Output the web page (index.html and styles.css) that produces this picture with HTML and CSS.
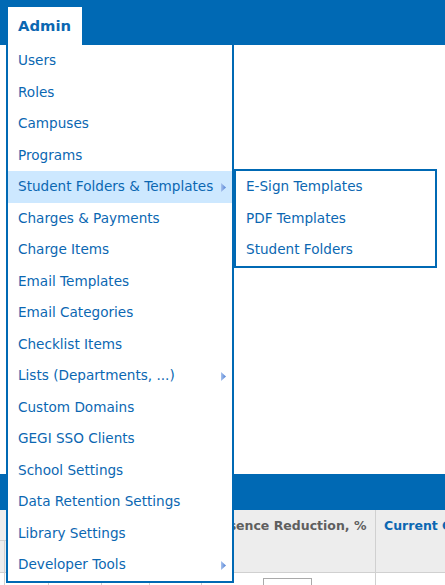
FILE: index.html
```html
<!DOCTYPE html>
<html>
<head>
<meta charset="utf-8">
<link rel="stylesheet" href="styles.css">
</head>
<body>
<div class="page">
  <div class="topbar">
    <div class="tab">Admin</div>
  </div>
  <div class="content"></div>
  <div class="band"></div>
  <table class="grid">
    <colgroup>
      <col class="w44"><col class="w44"><col class="w53"><col class="w48"><col class="w52"><col class="w174"><col class="w130">
    </colgroup>
    <tr class="hrow1">
      <th colspan="2"></th>
      <th colspan="3"></th>
      <th class="hcell" rowspan="2">Absence Reduction, %</th>
      <th class="hcell blue" rowspan="2">Current Grade</th>
    </tr>
    <tr class="hrow2">
      <th class="lcell">L</th>
      <th></th><th></th><th></th><th></th>
    </tr>
    <tr class="brow">
      <td></td><td></td><td></td><td></td><td></td>
      <td><span class="inp"></span></td>
      <td></td>
    </tr>
  </table>

  <ul class="menu">
    <li>Users</li>
    <li>Roles</li>
    <li>Campuses</li>
    <li>Programs</li>
    <li class="active has-sub">Student Folders &amp; Templates
      <svg class="arrow" width="5" height="9" viewBox="0 0 5 9"><defs><linearGradient id="g" x1="0" x2="1" y1="0" y2="0"><stop offset="0" stop-color="#a9c3ee"/><stop offset="1" stop-color="#4f7fd4"/></linearGradient></defs><polygon points="0,0 5,4.5 0,9" fill="url(#g)"/></svg>
      <ul class="submenu">
        <li>E-Sign Templates</li>
        <li>PDF Templates</li>
        <li>Student Folders</li>
      </ul>
    </li>
    <li>Charges &amp; Payments</li>
    <li>Charge Items</li>
    <li>Email Templates</li>
    <li>Email Categories</li>
    <li>Checklist Items</li>
    <li class="has-sub">Lists (Departments, ...)
      <svg class="arrow" width="5" height="9" viewBox="0 0 5 9"><polygon points="0,0 5,4.5 0,9" fill="url(#g)"/></svg>
    </li>
    <li>Custom Domains</li>
    <li>GEGI SSO Clients</li>
    <li>School Settings</li>
    <li>Data Retention Settings</li>
    <li>Library Settings</li>
    <li class="has-sub">Developer Tools
      <svg class="arrow" width="5" height="9" viewBox="0 0 5 9"><polygon points="0,0 5,4.5 0,9" fill="url(#g)"/></svg>
    </li>
  </ul>
</div>
</body>
</html>
```

FILE: styles.css
```css
* { box-sizing: border-box; }
html, body { margin: 0; padding: 0; background: #fff; overflow: hidden; }
body {
  font-family: "DejaVu Sans", Verdana, sans-serif;
  color: #0b67b2;
  width: 445px;
  height: 585px;
}
.page { position: relative; width: 445px; height: 585px; overflow: hidden; }

.topbar {
  height: 45px;
  background: #0069b4;
  padding: 7px 0 0 8px;
}
.tab {
  width: 74px;
  height: 38px;
  background: #fff;
  font-weight: bold;
  font-size: 14.8px;
  color: #0b67b2;
  padding: 10px 0 0 10px;
  line-height: 18px;
}

.content { height: 429px; }
.band { height: 36px; background: #0069b4; }

.grid {
  border-collapse: collapse;
  table-layout: fixed;
  width: 545px;
  margin-left: -40px;
  font-size: 12.5px;
}
.w44 { width: 44px; }
.w48 { width: 48px; }
.w52 { width: 52px; }
.w53 { width: 53px; }
.w174 { width: 174px; }
.w130 { width: 130px; }
.grid th, .grid td { padding: 0; border: 1px solid #d0d0d0; }
.grid th { background: #ededed; }
.grid tr.hrow1 th { height: 30px; border-top: 0; }
.grid tr.hrow2 th { height: 32px; }
.grid th.hcell {
  vertical-align: top;
  text-align: left;
  padding: 8px 8px 0 8px;
  font-weight: bold;
  color: #5f5f5f;
  white-space: nowrap;
  overflow: hidden;
  line-height: 16px;
}
.grid th.hcell.blue { color: #0b67b2; }
.grid th.lcell {
  text-align: right;
  color: #0b67b2;
  font-weight: bold;
  padding-right: 41px;
  overflow: hidden;
}
.grid td { height: 40px; vertical-align: top; }
.inp {
  display: block;
  width: 49px;
  height: 22px;
  margin: 5px 0 0 61px;
  border: 1px solid #aaa;
  background: #fff;
}

.menu {
  position: absolute;
  left: 6px;
  top: 45px;
  width: 228px;
  margin: 0;
  padding: 0;
  list-style: none;
  background: #fff;
  border: 2px solid #0069b4;
  border-top: 0;
  font-size: 13.6px;
}
.menu li {
  position: relative;
  height: 31.5px;
  line-height: 31.5px;
  padding-left: 10px;
  white-space: nowrap;
  color: #0b67b2;
}
.menu li.active { background: #cde8ff; }
.arrow {
  position: absolute;
  right: 6px;
  top: 12px;
}
.submenu {
  position: absolute;
  left: calc(100% + 2px);
  top: -2px;
  width: 203px;
  margin: 0;
  padding: 0;
  list-style: none;
  background: #fff;
  border: 2px solid #0069b4;
}
.submenu li { padding-left: 10px; }
```
